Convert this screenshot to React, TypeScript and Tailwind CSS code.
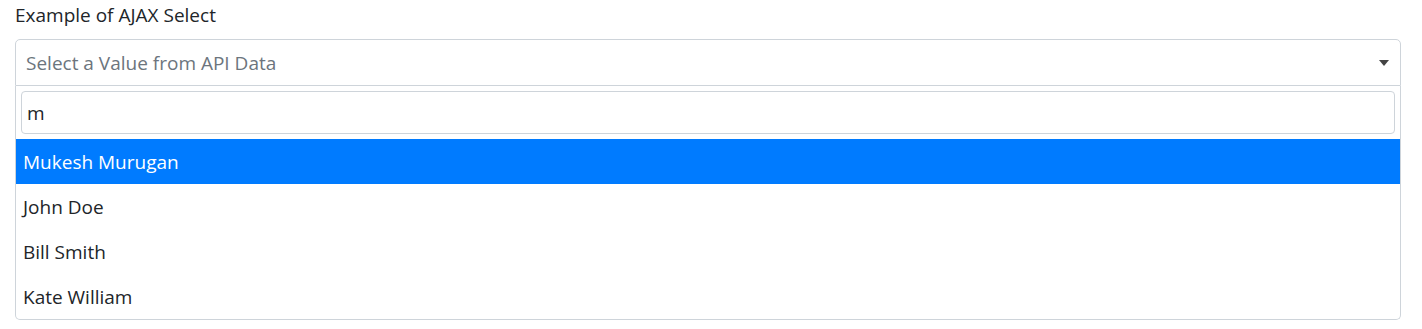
import { useState } from "react";

const people = ["Mukesh Murugan", "John Doe", "Bill Smith", "Kate William"];

export default function App() {
  const [query, setQuery] = useState("m");
  const active = 0;

  return (
    <div className="w-[1422px] h-[329px] bg-white px-[15px] pt-[3px] text-[#212529] font-['Open_Sans',sans-serif]">
      <label className="block text-[19px] leading-[24px] mb-[12px]">Example of AJAX Select</label>

      <div className="w-[1386px]">
        {/* closed select box */}
        <div className="h-[47px] flex items-center justify-between border border-[#ced4da] rounded-t-[5px] pl-[10px] pr-[11px]">
          <span className="text-[19px] text-[#6c757d] pt-[2px]">Select a Value from API Data</span>
          <span className="w-0 h-0 border-x-[5px] border-x-transparent border-t-[6px] border-t-[#444]" />
        </div>

        {/* dropdown */}
        <div className="border border-t-0 border-[#ced4da] rounded-b-[5px]">
          <div className="p-[5px]">
            <input
              autoFocus
              value={query}
              onChange={(e) => setQuery(e.target.value)}
              className="w-full h-[43px] border border-[#ced4da] rounded-[4px] px-[5px] text-[19px] outline-none caret-[#212529]"
            />
          </div>
          <ul>
            {people.map((name, i) => (
              <li
                key={name}
                className={
                  "h-[45px] flex items-center px-[7px] pt-[2px] text-[19px] " +
                  (i === active ? "bg-[#007bff] text-white" : "text-[#212529]")
                }
              >
                {name}
              </li>
            ))}
          </ul>
        </div>
      </div>
    </div>
  );
}
